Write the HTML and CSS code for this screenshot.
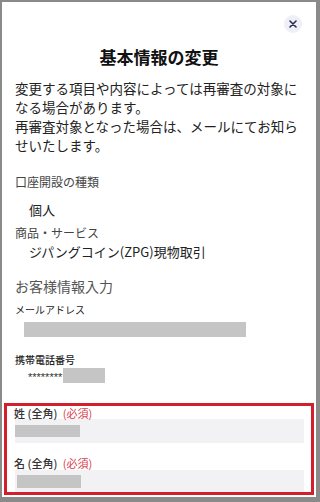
FILE: index.html
```html
<!DOCTYPE html>
<html lang="ja">
<head>
<meta charset="utf-8">
<link rel="stylesheet" href="styles.css">
</head>
<body>
<div class="panel">
  <div class="header">
    <button class="close" aria-label="閉じる">
      <svg width="8" height="8" viewBox="0 0 8 8"><path d="M1 1L7 7M7 1L1 7" stroke="#2b2b5e" stroke-width="1.6" stroke-linecap="round"/></svg>
    </button>
  </div>
  <h1 class="title">基本情報の変更</h1>
  <p class="lead">変更する項目や内容によっては再審査の対象になる場合があります。<br>再審査対象となった場合は、メールにてお知らせいたします。</p>
  <div class="label l1">口座開設の種類</div>
  <div class="value v1">個人</div>
  <div class="label l2">商品・サービス</div>
  <div class="value v2">ジパングコイン(ZPG)現物取引</div>
  <h2 class="section">お客様情報入力</h2>
  <div class="small mail">メールアドレス</div>
  <div class="mask email"></div>
  <div class="small phone">携帯電話番号</div>
  <div class="phone-row"><span class="stars">********</span><span class="mask tail"></span></div>
  <div class="focus">
    <div class="field-label">姓 (全角) <span class="req">(必須)</span></div>
    <div class="input first"><span class="mask ph1"></span></div>
    <div class="field-label second">名 (全角) <span class="req">(必須)</span></div>
    <div class="input last"><span class="mask ph2"></span></div>
  </div>
</div>
</body>
</html>
```
FILE: styles.css
```css
html, body { margin: 0; padding: 0; }
body {
  background: #8a8a8a;
  width: 320px;
  height: 502px;
  overflow: hidden;
  font-family: "Noto Sans CJK JP", "Noto Sans", sans-serif;
  color: #222;
}
.panel {
  margin: 2px 4px 0 2px;
  width: 314px;
  height: 495px;
  background: #fff;
  box-sizing: border-box;
  padding: 0 13px;
  overflow: hidden;
}
.header {
  display: flex;
  justify-content: flex-end;
  padding-top: 13px;
  margin-right: 1px;
}
.close {
  width: 18px;
  height: 18px;
  border-radius: 50%;
  border: none;
  background: #efeff6;
  padding: 0;
  display: flex;
  align-items: center;
  justify-content: center;
}
.title {
  margin: 12px 0 0;
  font-size: 17px;
  line-height: 24px;
  font-weight: 700;
  text-align: center;
  color: #111;
}
.lead {
  margin: 9.5px 0 0;
  font-size: 13.5px;
  line-height: 19px;
  color: #222;
}
.label {
  font-size: 12px;
  line-height: 18px;
  color: #444;
}
.l1 { margin-top: 18.5px; }
.l2 { margin-top: 5px; }
.value {
  font-size: 13px;
  line-height: 18px;
  color: #222;
  padding-left: 14px;
}
.v1 { margin-top: 10px; }
.v2 { margin-top: 1px; }
.section {
  margin: 15px 0 0;
  font-size: 14px;
  line-height: 20px;
  font-weight: 400;
  color: #555;
}
.small {
  font-size: 10px;
  line-height: 14px;
  color: #222;
}
.mail { margin-top: 7px; }
.phone { margin-top: 16px; font-weight: 500; }
.mask { background: #c5c5c5; display: block; }
.email {
  margin: 5px 0 0 9px;
  width: 222px;
  height: 15px;
}
.phone-row {
  display: flex;
  align-items: center;
  margin: 1px 0 0 13px;
  height: 15px;
}
.stars {
  font-family: "Liberation Sans", sans-serif;
  font-size: 11px;
  line-height: 15px;
  color: #333;
  width: 35px;
  padding-top: 3px;
  box-sizing: border-box;
}
.tail { width: 42px; height: 15px; }
.focus {
  margin: 20px -11px 0;
  height: 92px;
  box-sizing: border-box;
  border: 3px solid #d31f2c;
  padding: 1px 7px 0 7px;
  overflow: hidden;
}
.field-label {
  font-size: 11px;
  line-height: 12px;
  font-weight: 500;
  color: #333;
}
.field-label.second { margin-top: 14px; }
.req { color: #d8404c; font-weight: 400; margin-left: 3px; }
.input {
  background: #f2f2f4;
  display: flex;
  align-items: flex-start;
  margin-left: 1px;
}
.input.first { height: 24px; }
.input.last { height: 22px; margin-top: 1px; }
.ph1 { width: 65px; height: 12px; margin-top: 6px; }
.ph2 { width: 64px; height: 13px; margin: 5px 0 0 2px; }
```
